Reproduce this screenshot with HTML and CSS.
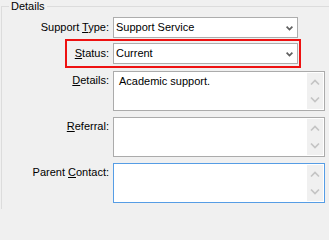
FILE: index.html
```html
<!DOCTYPE html>
<html>
<head>
<meta charset="utf-8">
<link rel="stylesheet" href="styles.css">
</head>
<body>
<section class="group">
  <div class="group-head"><span class="group-title">Details</span></div>

  <div class="group-body">
    <div class="row">
      <label class="lbl">Support <u>T</u>ype:</label>
      <div class="combo">
        <span class="combo-text">Support Service</span>
        <svg class="combo-arrow" width="7" height="5" viewBox="0 0 7 5"><polyline points="0.6,0.6 3.5,3.6 6.4,0.6" fill="none" stroke="#5f5f5f" stroke-width="1.7"/></svg>
      </div>
    </div>

    <div class="row row-highlight">
      <label class="lbl lbl-short"><u>S</u>tatus:</label>
      <div class="combo">
        <span class="combo-text">Current</span>
        <svg class="combo-arrow" width="7" height="5" viewBox="0 0 7 5"><polyline points="0.6,0.6 3.5,3.6 6.4,0.6" fill="none" stroke="#5f5f5f" stroke-width="1.7"/></svg>
      </div>
    </div>

    <div class="row row-memo row-first-memo">
      <label class="lbl lbl-top"><u>D</u>etails:</label>
      <div class="memo">
        <div class="memo-text">Academic support.</div>
        <svg class="memo-scroll" width="16" height="36" viewBox="0 0 16 36"><polyline points="4,11.5 8,7.5 12,11.5" fill="none" stroke="#c4c4c4" stroke-width="1.7"/><polyline points="4,24.5 8,28.5 12,24.5" fill="none" stroke="#c4c4c4" stroke-width="1.7"/></svg>
      </div>
    </div>

    <div class="row row-memo">
      <label class="lbl lbl-top"><u>R</u>eferral:</label>
      <div class="memo">
        <div class="memo-text"></div>
        <svg class="memo-scroll" width="16" height="36" viewBox="0 0 16 36"><polyline points="4,11.5 8,7.5 12,11.5" fill="none" stroke="#c4c4c4" stroke-width="1.7"/><polyline points="4,24.5 8,28.5 12,24.5" fill="none" stroke="#c4c4c4" stroke-width="1.7"/></svg>
      </div>
    </div>

    <div class="row row-memo">
      <label class="lbl lbl-top">Parent <u>C</u>ontact:</label>
      <div class="memo memo-focus">
        <div class="memo-text"></div>
        <svg class="memo-scroll" width="16" height="36" viewBox="0 0 16 36"><polyline points="4,11.5 8,7.5 12,11.5" fill="none" stroke="#c4c4c4" stroke-width="1.7"/><polyline points="4,24.5 8,28.5 12,24.5" fill="none" stroke="#c4c4c4" stroke-width="1.7"/></svg>
      </div>
    </div>
  </div>
</section>
</body>
</html>
```

FILE: styles.css
```css
html, body {
  margin: 0;
  padding: 0;
  background: #f0f0f0;
}

body {
  width: 329px;
  font-family: "Liberation Sans", Arial, sans-serif;
  font-size: 11px;
  color: #000;
}

.group {
  margin: 0 0 0 1px;
  width: 328px;
}

.group-head {
  display: flex;
  height: 13px;
}

.group-head::before {
  content: "";
  flex: none;
  align-self: flex-end;
  width: 8px;
  height: 7px;
  box-sizing: border-box;
  border-top: 1px solid #dcdcdc;
  border-left: 1px solid #dcdcdc;
}

.group-head::after {
  content: "";
  flex: 1;
  align-self: flex-start;
  margin-top: 6px;
  height: 1px;
  background: #dcdcdc;
}

.group-title {
  padding: 0 2px;
  line-height: 13px;
  white-space: nowrap;
}

.group-body {
  border-left: 1px solid #dcdcdc;
  padding: 4px 0 6px 7px;
}

.row {
  display: flex;
  align-items: center;
  column-gap: 4px;
}

.lbl {
  width: 100px;
  flex: none;
  text-align: right;
  line-height: 13px;
  white-space: nowrap;
}

.lbl u {
  text-decoration-thickness: 1px;
  text-underline-offset: 1px;
}

.lbl-short {
  width: 42px;
}

.lbl-top {
  align-self: flex-start;
  padding-top: 3px;
}

.row-highlight {
  margin-top: 1px;
  margin-left: 56px;
  width: 236px;
  box-sizing: border-box;
  border: 2px solid #ee1111;
  padding: 2px 1px 2px 0;
}

.combo {
  width: 185px;
  height: 21px;
  box-sizing: border-box;
  border: 1px solid #adadad;
  background: #fff;
  display: flex;
  align-items: center;
  padding: 0 4px 0 2px;
}

.combo-text {
  flex: 1;
  line-height: 13px;
  white-space: nowrap;
}

.combo-arrow {
  flex: none;
  display: block;
  margin-top: 1px;
}

.row-memo {
  align-items: flex-start;
  margin-top: 6px;
}

.row-first-memo {
  margin-top: 3px;
}

.memo {
  width: 212px;
  height: 40px;
  box-sizing: border-box;
  border: 1px solid #ababab;
  background: #fff;
  display: flex;
  padding: 1px;
}

.memo-focus {
  border-color: #569de5;
}

.memo-text {
  flex: 1;
  padding: 2px 0 0 4px;
  line-height: 13px;
}

.memo-scroll {
  flex: none;
  display: block;
  background: #f0f0f0;
}
```
